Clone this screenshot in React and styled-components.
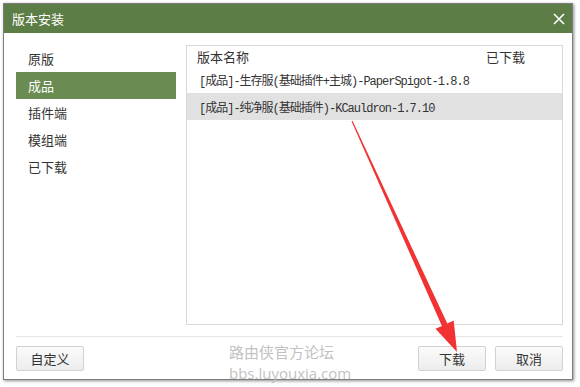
import styled, { createGlobalStyle } from "styled-components";

const Global = createGlobalStyle`
  html, body {
    margin: 0;
    padding: 0;
    background: #fff;
  }
  body {
    font-family: "Noto Sans CJK SC", "Liberation Sans", sans-serif;
    font-size: 13px;
    color: #333;
  }
`;

const Stage = styled.div`
  position: relative;
  width: 580px;
  height: 387px;
  padding: 3px;
  box-sizing: border-box;
`;

const Window = styled.div`
  width: 570px;
  height: 377px;
  box-sizing: border-box;
  border: 1px solid #7d7d7d;
  box-shadow: 1px 1px 3px rgba(0, 0, 0, 0.45);
  background: #fff;
  display: flex;
  flex-direction: column;
`;

const TitleBar = styled.div`
  height: 29px;
  background: #5c7d45;
  display: flex;
  align-items: center;
  justify-content: space-between;
  padding: 0 6px 0 8px;
  color: #fff;
  font-size: 13px;
`;

const Close = styled.svg`
  width: 12px;
  height: 12px;
  margin-right: 1px;
`;

const Body = styled.div`
  flex: 1;
  display: flex;
  gap: 10px;
  padding: 12px 9px 0 12px;
`;

const Sidebar = styled.ul`
  list-style: none;
  margin: 0;
  padding: 0;
  width: 160px;
`;

const SideItem = styled.li`
  height: 27px;
  line-height: 27px;
  padding-left: 12px;
  font-size: 13px;
  color: ${(p) => (p.active ? "#fff" : "#333")};
  background: ${(p) => (p.active ? "#6a8b52" : "transparent")};
`;

const ListPanel = styled.div`
  flex: 1;
  height: 280px;
  border: 1px solid #d9d9d9;
  box-sizing: border-box;
`;

const Header = styled.div`
  height: 20px;
  display: flex;
  align-items: center;
  padding: 0 10px;
  font-size: 13px;
  color: #333;
`;

const Col = styled.span`
  flex: 1;
`;

const DoneCol = styled.span`
  width: 66px;
`;

const Row = styled.div`
  height: 27px;
  display: flex;
  align-items: center;
  padding-left: 12px;
  background: ${(p) => (p.selected ? "#e1e1e1" : "transparent")};
  font-family: "Liberation Mono", "Noto Sans CJK SC", monospace;
  font-size: 12px;
  letter-spacing: -1px;
  color: #333;
`;

const Footer = styled.div`
  margin: 0 9px 0 12px;
  border-top: 1px solid #e6e6e6;
  padding: 9px 0 8px;
  display: flex;
  gap: 9px;
`;

const Button = styled.button`
  width: 68px;
  height: 25px;
  box-sizing: border-box;
  border: 1px solid #d2d2d2;
  border-radius: 2px;
  background: linear-gradient(#fbfbfb, #ececec);
  font-family: "Noto Sans CJK SC", sans-serif;
  font-size: 13px;
  color: #333;
  padding: 0;
  margin-left: ${(p) => (p.push ? "auto" : "0")};
`;

const Watermark = styled.div`
  position: absolute;
  left: 229px;
  top: 342px;
  color: #c2c2c2;
  font-family: "Noto Sans CJK SC", "Open Sans", sans-serif;
`;

const MarkLine = styled.div`
  height: 21px;
  line-height: 20px;
  font-size: 15px;
  font-family: ${(p) => (p.latin ? '"Open Sans", sans-serif' : "inherit")};
`;

const Overlay = styled.svg`
  position: absolute;
  left: 0;
  top: 0;
  pointer-events: none;
`;

const sideItems = ["原版", "成品", "插件端", "模组端", "已下载"];

const rows = [
  "[成品]-生存服(基础插件+主城)-PaperSpigot-1.8.8",
  "[成品]-纯净服(基础插件)-KCauldron-1.7.10",
];

export default function App() {
  return (
    <Stage>
      <Global />
      <Window>
        <TitleBar>
          <span>版本安装</span>
          <Close viewBox="0 0 12 12">
            <path d="M1 1L11 11M11 1L1 11" stroke="#fff" strokeWidth="1.6" />
          </Close>
        </TitleBar>
        <Body>
          <Sidebar>
            {sideItems.map((s, i) => (
              <SideItem key={s} active={i === 1}>
                {s}
              </SideItem>
            ))}
          </Sidebar>
          <ListPanel>
            <Header>
              <Col>版本名称</Col>
              <DoneCol>已下载</DoneCol>
            </Header>
            {rows.map((r, i) => (
              <Row key={r} selected={i === 1}>
                {r}
              </Row>
            ))}
          </ListPanel>
        </Body>
        <Footer>
          <Button>自定义</Button>
          <Button push>下载</Button>
          <Button>取消</Button>
        </Footer>
      </Window>
      <Watermark>
        <MarkLine>路由侠官方论坛</MarkLine>
        <MarkLine latin>bbs.luyouxia.com</MarkLine>
      </Watermark>
      <Overlay width="580" height="387" viewBox="0 0 580 387">
        <polygon
          points="351.5,121.2 441.9,325.9 435.5,328.8 457,352 453.7,320.6 447.3,323.5 352.5,120.8"
          fill="#f23333"
        />
      </Overlay>
    </Stage>
  );
}
